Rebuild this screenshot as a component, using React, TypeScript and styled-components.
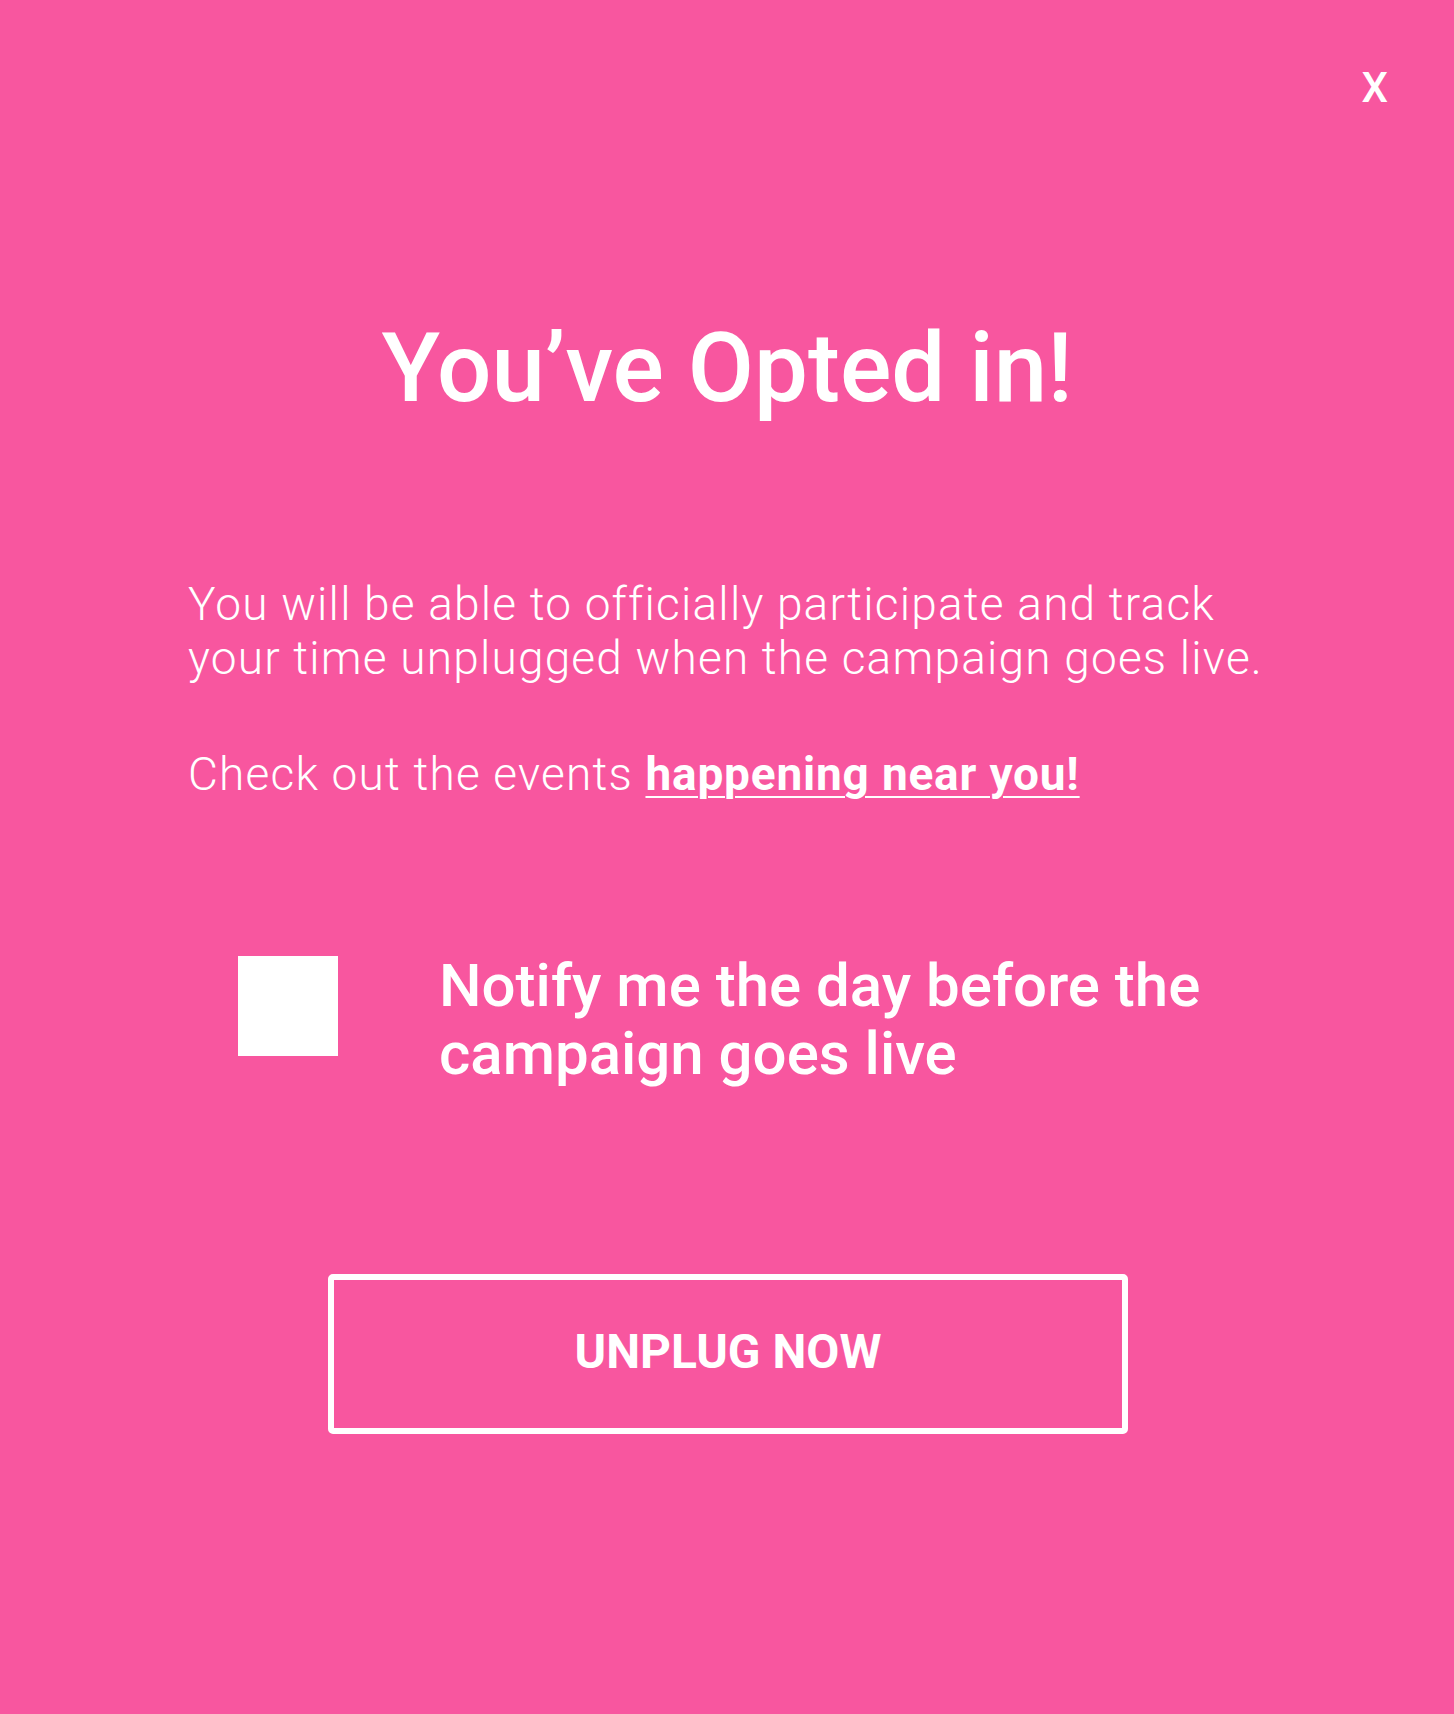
import styled, { createGlobalStyle } from 'styled-components';

const GlobalStyle = createGlobalStyle`
	html, body {
		margin: 0;
		padding: 0;
		background: #f8569f;
	}
	* {
		box-sizing: border-box;
	}
`;

const Page = styled.div`
	display: flex;
	flex-direction: column;
	min-height: 1714px;
	background: #f8569f;
	color: #ffffff;
	font-family: Roboto, 'Liberation Sans', Arial, sans-serif;
`;

const Header = styled.div`
	display: flex;
	justify-content: flex-end;
	padding: 67px 66px 0 0;
`;

const CloseButton = styled.button`
	background: transparent;
	border: none;
	padding: 0;
	color: #ffffff;
	font-family: inherit;
	font-size: 42px;
	font-weight: 500;
	line-height: 1;
	cursor: pointer;
`;

const Title = styled.h1`
	margin: 202px 0 0;
	text-align: center;
	font-size: 96px;
	font-weight: 500;
	line-height: 1.2;
`;

const Content = styled.div`
	margin-top: 151px;
	padding-left: 188px;
	max-width: 1290px;
`;

const Paragraph = styled.p<{ $gap?: number }>`
	margin: ${(p) => p.$gap ?? 0}px 0 0;
	font-size: 46px;
	font-weight: 300;
	line-height: 54px;
	letter-spacing: 1.2px;

	a {
		color: #ffffff;
		font-weight: 700;
		letter-spacing: 0.8px;
		text-decoration: underline;
		text-underline-offset: 6px;
		text-decoration-thickness: 2px;
	}
`;

const NotifyRow = styled.label`
	display: flex;
	align-items: flex-start;
	gap: 101px;
	margin-top: 151px;
	padding-left: 238px;
	cursor: pointer;
`;

const CheckBox = styled.span`
	flex: 0 0 100px;
	width: 100px;
	height: 100px;
	margin-top: 4px;
	background: #ffffff;
`;

const NotifyText = styled.span`
	max-width: 820px;
	font-size: 60px;
	font-weight: 500;
	line-height: 68px;
`;

const UnplugButton = styled.button`
	align-self: center;
	width: 800px;
	height: 160px;
	margin: 186px 0 0 2px;
	padding: 0 0 5px;
	background: transparent;
	border: 6px solid #ffffff;
	border-radius: 5px;
	color: #ffffff;
	font-family: inherit;
	font-size: 48px;
	font-weight: 700;
	cursor: pointer;
`;

export default function App() {
	return (
		<>
			<GlobalStyle />
			<Page>
				<Header>
					<CloseButton type="button">X</CloseButton>
				</Header>
				<Title>You’ve Opted in!</Title>
				<Content>
					<Paragraph>
						You will be able to officially participate and track your time unplugged when the campaign goes live.
					</Paragraph>
					<Paragraph $gap={62}>
						Check out the events <a href="#events">happening near you!</a>
					</Paragraph>
				</Content>
				<NotifyRow>
					<CheckBox />
					<NotifyText>Notify me the day before the campaign goes live</NotifyText>
				</NotifyRow>
				<UnplugButton type="button">UNPLUG NOW</UnplugButton>
			</Page>
		</>
	);
}
